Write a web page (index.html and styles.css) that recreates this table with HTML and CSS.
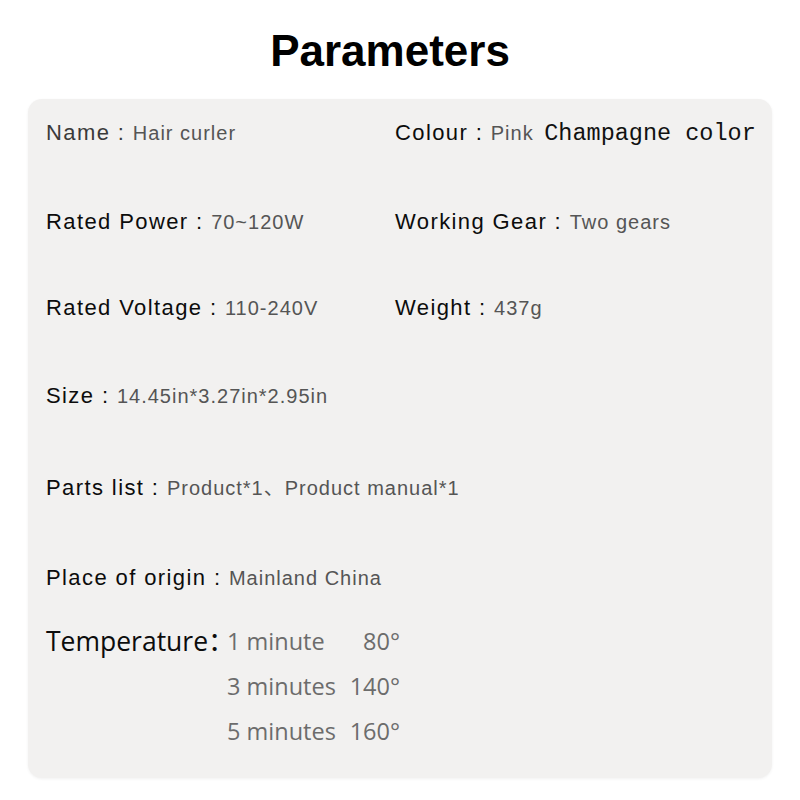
FILE: index.html
```html
<!DOCTYPE html>
<html>
<head>
<meta charset="utf-8">
<link rel="stylesheet" href="styles.css">
</head>
<body>
<h1 class="title">Parameters</h1>
<section class="card">
  <div class="pair r1">
    <div class="item"><span class="label name">Name : </span><span class="value">Hair curler</span></div>
    <div class="item"><span class="label">Colour : </span><span class="value">Pink </span><span class="mono">Champagne color</span></div>
  </div>
  <div class="pair r2">
    <div class="item"><span class="label">Rated Power : </span><span class="value">70~120W</span></div>
    <div class="item"><span class="label">Working Gear : </span><span class="value">Two gears</span></div>
  </div>
  <div class="pair r3">
    <div class="item"><span class="label">Rated Voltage : </span><span class="value">110-240V</span></div>
    <div class="item"><span class="label">Weight : </span><span class="value">437g</span></div>
  </div>
  <div class="item r4"><span class="label">Size : </span><span class="value">14.45in*3.27in*2.95in</span></div>
  <div class="item r5"><span class="label">Parts list : </span><span class="value">Product*1、Product manual*1</span></div>
  <div class="item r6"><span class="label">Place of origin : </span><span class="value">Mainland China</span></div>
  <div class="temp">
    <div class="temp-label">Temperature：</div>
    <div class="temp-time">1 minute</div><div class="temp-deg">80°</div>
    <div></div><div class="temp-time">3 minutes</div><div class="temp-deg">140°</div>
    <div></div><div class="temp-time">5 minutes</div><div class="temp-deg">160°</div>
  </div>
</section>
</body>
</html>
```
FILE: styles.css
```css
html, body {
  margin: 0;
  padding: 0;
  background: #ffffff;
}
body {
  font-family: "Liberation Sans", "Noto Sans CJK SC", sans-serif;
  width: 800px;
  height: 800px;
  overflow: hidden;
}
.title {
  margin: 26px 0 0 0;
  padding-right: 20px;
  font-size: 44px;
  line-height: 50px;
  font-weight: 700;
  text-align: center;
  color: #000;
}
.card {
  box-sizing: border-box;
  margin: 23px 28px 0 28px;
  height: 679px;
  background: #f2f1f0;
  border-radius: 14px;
  box-shadow: 0 1px 3px rgba(0,0,0,0.06);
  padding: 19px 0 0 18px;
  display: flex;
  flex-direction: column;
}
.pair {
  display: grid;
  grid-template-columns: 349px 1fr;
}
.item {
  height: 30px;
  line-height: 30px;
  white-space: nowrap;
}
.label {
  font-size: 22px;
  letter-spacing: 1.4px;
  color: #0c0c0c;
}
.label.name {
  color: #3a3a3a;
}
.value {
  font-size: 20px;
  letter-spacing: 1px;
  color: #555555;
}
.mono {
  font-family: "Liberation Mono", monospace;
  font-size: 23.5px;
  color: #111;
  margin-left: 4px;
}
.r2 { margin-top: 59px; }
.r3 { margin-top: 56px; }
.r4 { margin-top: 58px; }
.r5 { margin-top: 62px; }
.r6 { margin-top: 60px; }
.temp {
  margin-top: 31px;
  display: grid;
  grid-template-columns: 181px 120px 53px;
  row-gap: 11px;
  font-family: "Open Sans", "Noto Sans CJK SC", sans-serif;
  line-height: 34px;
}
.temp-label {
  font-size: 26.5px;
  color: #0c0c0c;
  white-space: nowrap;
}
.temp-time, .temp-deg {
  font-size: 23.5px;
  color: #6c6c6c;
  white-space: nowrap;
}
.temp-deg {
  text-align: right;
}
```
